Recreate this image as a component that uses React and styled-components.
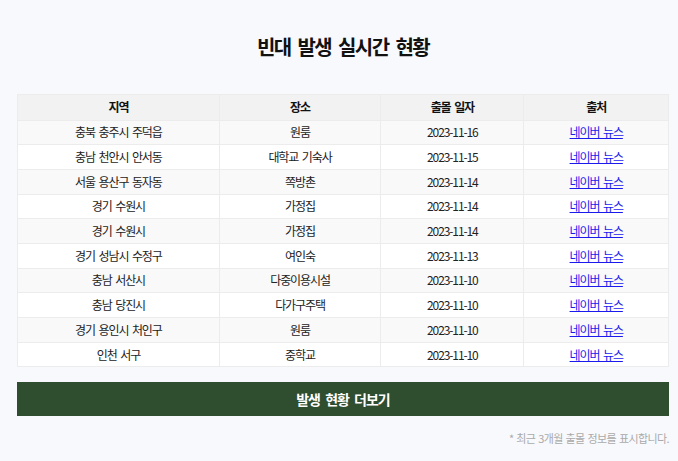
import React from 'react'
import styled, {createGlobalStyle} from 'styled-components'

const GlobalStyle = createGlobalStyle`
  body {
    margin: 0;
    background: #f8f9fd;
    font-family: "Noto Sans CJK KR", "Noto Sans", sans-serif;
    color: #222;
  }
`;

const Page = styled.div`
  padding: 0 9px 0 17px;
`;

const Title = styled.h2`
  margin: 0;
  padding: 32px 0 32px;
  font-size: 20px;
  line-height: 30px;
  font-weight: 700;
  letter-spacing: -1.6px;
  word-spacing: 4px;
  text-align: center;
  color: #111;
`;

const Table = styled.table`
  width: 100%;
  border-collapse: collapse;
  background: #fff;
  border: 1px solid #ececec;
  font-size: 12px;
  letter-spacing: -1.1px;
  word-spacing: 2px;
`;

const Th = styled.th`
  background: #f2f2f2;
  font-weight: 700;
  height: 24.5px;
  padding: 0 4px;
  line-height: 18px;
  border: 1px solid #ececec;
  color: #111;
  width: ${(props) => props.w};
`;

const Tr = styled.tr`
  background: ${(props) => (props.odd ? "#f9f9f9" : "#ffffff")};
`;

const Td = styled.td`
  text-align: center;
  height: 23.7px;
  padding: 0 4px;
  line-height: 18px;
  border: 1px solid #ececec;
  color: #222;
`;

const Link = styled.a`
  color: #1a1aee;
  text-decoration: underline;
`;

const MoreButton = styled.button`
  display: block;
  width: 100%;
  margin-top: 15px;
  height: 34px;
  border: none;
  background: #2f4d2f;
  color: #fff;
  font-family: inherit;
  font-size: 14px;
  font-weight: 700;
  letter-spacing: -1px;
  word-spacing: 3px;
  cursor: pointer;
`;

const Note = styled.p`
  margin: 14px 0 0;
  text-align: right;
  font-size: 11px;
  line-height: 16px;
  letter-spacing: -0.6px;
  word-spacing: 1px;
  color: #aaa;
`;

const rows = [
    ["충북 충주시 주덕읍", "원룸", "2023-11-16"],
    ["충남 천안시 안서동", "대학교 기숙사", "2023-11-15"],
    ["서울 용산구 동자동", "쪽방촌", "2023-11-14"],
    ["경기 수원시", "가정집", "2023-11-14"],
    ["경기 수원시", "가정집", "2023-11-14"],
    ["경기 성남시 수정구", "여인숙", "2023-11-13"],
    ["충남 서산시", "다중이용시설", "2023-11-10"],
    ["충남 당진시", "다가구주택", "2023-11-10"],
    ["경기 용인시 처인구", "원룸", "2023-11-10"],
    ["인천 서구", "중학교", "2023-11-10"],
]

const App = () => {
    return (
        <Page>
            <GlobalStyle/>
            <Title>빈대 발생 실시간 현황</Title>
            <Table>
                <thead>
                <tr>
                    <Th w="31%">지역</Th>
                    <Th w="24.8%">장소</Th>
                    <Th w="22%">출몰 일자</Th>
                    <Th w="22.2%">출처</Th>
                </tr>
                </thead>
                <tbody>
                {rows.map((row, index) => (
                    <Tr key={index} odd={index % 2 === 0}>
                        <Td>{row[0]}</Td>
                        <Td>{row[1]}</Td>
                        <Td>{row[2]}</Td>
                        <Td><Link href="#">네이버 뉴스</Link></Td>
                    </Tr>
                ))}
                </tbody>
            </Table>
            <MoreButton>발생 현황 더보기</MoreButton>
            <Note>* 최근 3개월 출몰 정보를 표시합니다.</Note>
        </Page>
    )
}

export default App
